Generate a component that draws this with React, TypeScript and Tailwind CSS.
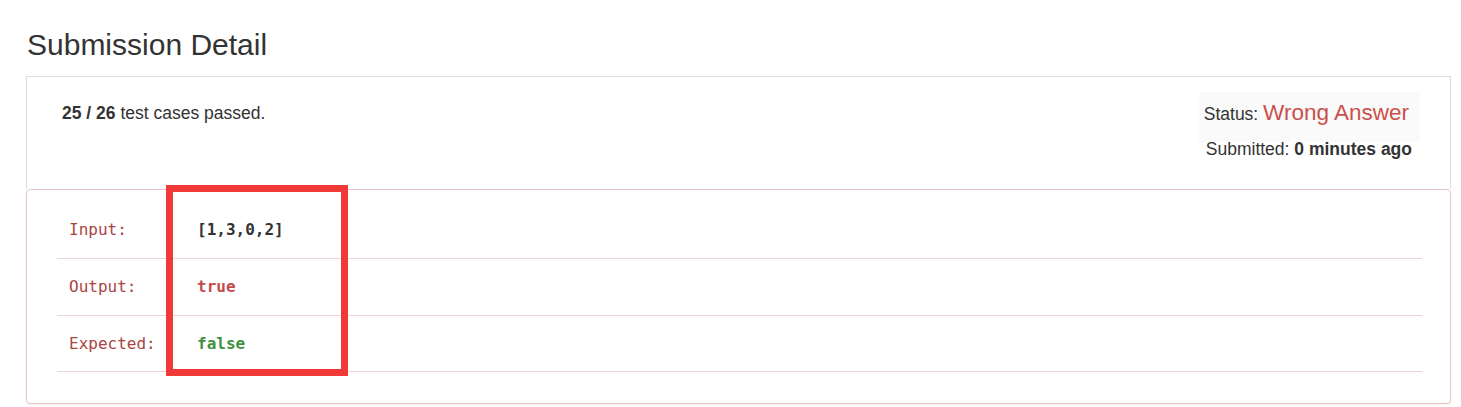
const rows = [
  { label: "Input:", value: "[1,3,0,2]", color: "text-[#333333]" },
  { label: "Output:", value: "true", color: "text-[#c24d4b]" },
  { label: "Expected:", value: "false", color: "text-[#3f9142]" },
];

export default function App() {
  return (
    <div className="relative min-h-screen bg-white font-['Liberation_Sans',Arial,sans-serif] text-[#333333]">
      <div className="ml-[26px] w-[1425px] pt-[28px]">
        <h3 className="mb-[15px] pl-px text-[30px] leading-[33px] font-normal">Submission Detail</h3>

        {/* summary */}
        <div className="flex items-start justify-between border-x border-t border-[#dddddd] pt-[15px] pb-[30px] pl-[35px] pr-[30px]">
          <div className="mt-[9px] text-[17.5px] leading-[25px]">
            <strong>25 / 26</strong> test cases passed.
          </div>
          <div className="flex flex-col items-end">
            <div className="bg-[#fafafa] pt-[5px] pb-[11px] pl-[5px] pr-[11px] leading-[32px]">
              <span className="text-[17.5px]">Status: </span>
              <span className="text-[22.5px] text-[#c9504c]">Wrong Answer</span>
            </div>
            <div className="-mt-[2px] mr-[8px] text-[17.5px] leading-[19px]">
              Submitted: <strong>0 minutes ago</strong>
            </div>
          </div>
        </div>

        {/* failing case */}
        <div className="rounded-[4px] border border-[#e6c3c9] pt-[12px] pb-[31px] pl-[30px] pr-[28px] shadow-[0_1px_2px_rgba(169,68,66,0.08)]">
          {rows.map((r, i) => (
            <div
              key={r.label}
              className={`flex items-center border-b border-[#efd3d7] font-['DejaVu_Sans_Mono',monospace] text-[16px] ${i === 2 ? "h-[56px]" : "h-[57px]"}`}
            >
              <div className="w-[140px] pl-[12px] text-[#a94442]">{r.label}</div>
              <div className={`font-bold ${r.color}`}>{r.value}</div>
            </div>
          ))}
        </div>
      </div>

      {/* annotation */}
      <div className="absolute left-[166px] top-[185px] h-[191px] w-[182px] border-[7px] border-[#f03a3a]" />
    </div>
  );
}
